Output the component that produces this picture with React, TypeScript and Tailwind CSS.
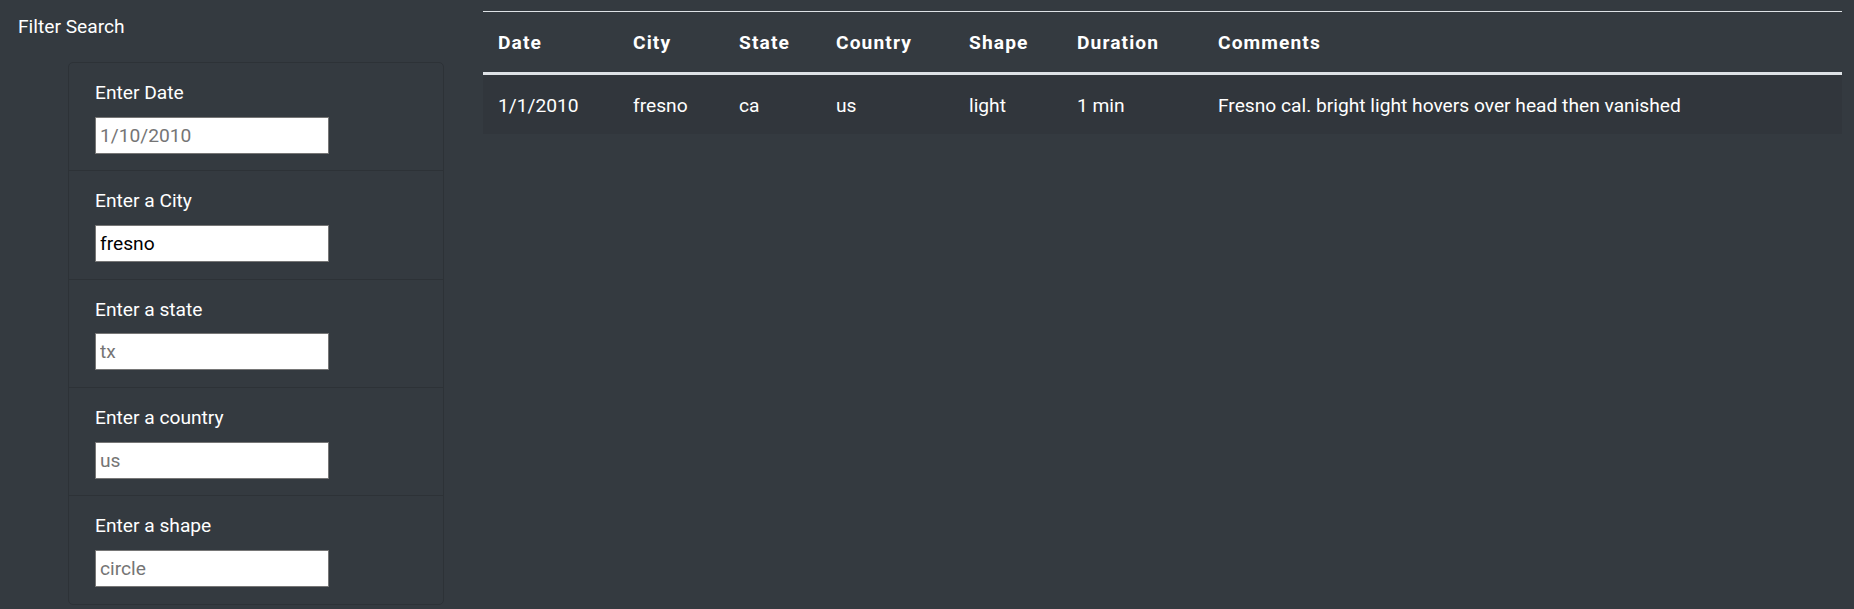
const filters = [
  { label: "Enter Date", placeholder: "1/10/2010", value: "" },
  { label: "Enter a City", placeholder: "", value: "fresno" },
  { label: "Enter a state", placeholder: "tx", value: "" },
  { label: "Enter a country", placeholder: "us", value: "" },
  { label: "Enter a shape", placeholder: "circle", value: "" },
];

const columns = [
  { name: "Date", width: "w-[135px]" },
  { name: "City", width: "w-[106px]" },
  { name: "State", width: "w-[97px]" },
  { name: "Country", width: "w-[133px]" },
  { name: "Shape", width: "w-[108px]" },
  { name: "Duration", width: "w-[141px]" },
  { name: "Comments", width: "" },
];

const rows = [
  ["1/1/2010", "fresno", "ca", "us", "light", "1 min", "Fresno cal. bright light hovers over head then vanished"],
];

export default function App() {
  return (
    <div className="flex h-[609px] w-full overflow-hidden bg-[#343a40] font-['Segoe_UI',Roboto,sans-serif] text-[19.2px] leading-[28.8px] text-white">
      <aside className="w-[464px] shrink-0 px-[18px] pt-[13px]">
        <h5 className="text-[19.2px] leading-[28.8px]">Filter Search</h5>
        <ul className="mt-[20px] ml-[50px] w-[376px] rounded-[5px] border border-[#2d3237]">
          {filters.map((f, i) => (
            <li
              key={f.label}
              className={
                "px-[26px] pt-[16px] pb-[16.6px] " + (i > 0 ? "border-t border-[#2d3237]" : "")
              }
            >
              <label className="block mb-[9px]">{f.label}</label>
              <input
                type="text"
                placeholder={f.placeholder}
                defaultValue={f.value}
                className="block h-[37px] w-[234px] border border-[#767676] bg-white px-[4px] text-[19.2px] font-normal text-black outline-none placeholder:text-[#757575]"
              />
            </li>
          ))}
        </ul>
      </aside>
      <main className="flex-1 pt-[11px] pr-[12px] pl-[19px]">
        <table className="w-full border-collapse border-t border-[#dee2e6] text-left">
          <thead>
            <tr className="border-b-[3px] border-[#dee2e6]">
              {columns.map((c) => (
                <th
                  key={c.name}
                  className={"px-[15px] pt-[17px] pb-[14.2px] font-bold tracking-[1.1px] " + c.width}
                >
                  {c.name}
                </th>
              ))}
            </tr>
          </thead>
          <tbody>
            {rows.map((r, i) => (
              <tr key={i} className="bg-[#31363c]">
                {r.map((cell, j) => (
                  <td key={j} className="px-[15px] pt-[17.5px] pb-[12.5px]">
                    {cell}
                  </td>
                ))}
              </tr>
            ))}
          </tbody>
        </table>
      </main>
    </div>
  );
}
